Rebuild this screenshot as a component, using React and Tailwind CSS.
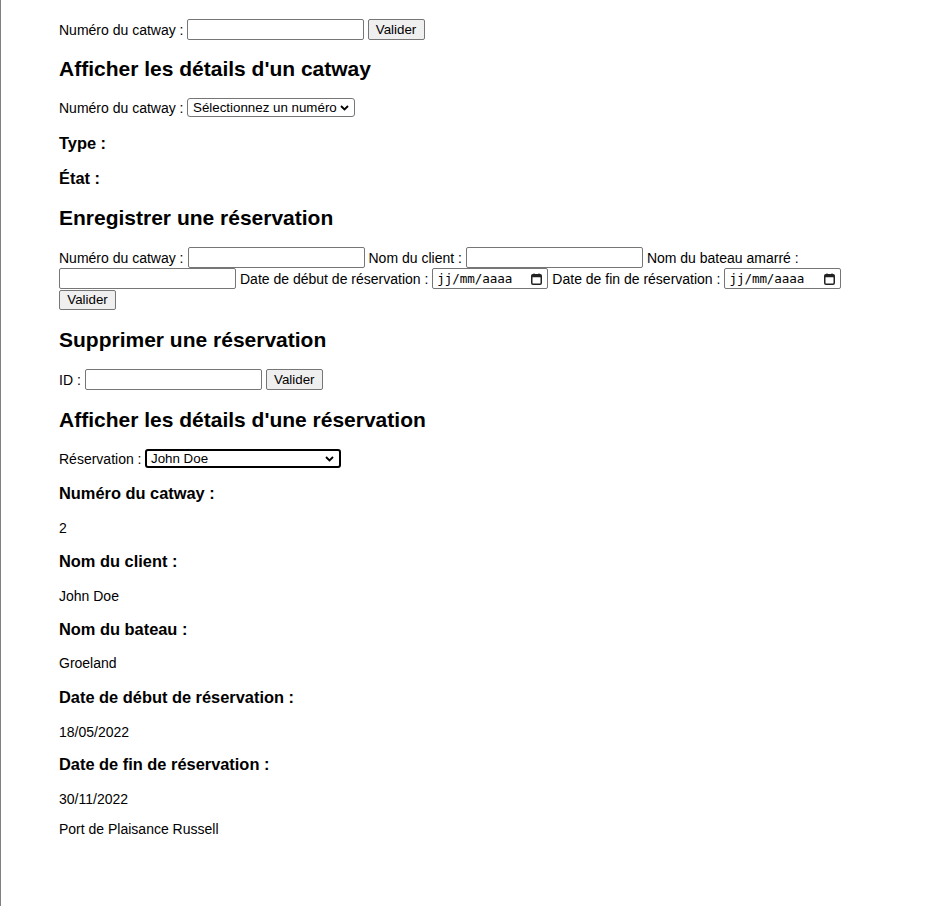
import { useState } from "react";

const reservations = [
  {
    id: "1",
    client: "John Doe",
    catway: "2",
    boat: "Groeland",
    start: "18/05/2022",
    end: "30/11/2022",
  },
];

function Chevron() {
  return (
    <svg width="9" height="6" viewBox="0 0 9 6" className="shrink-0">
      <path d="M1 1l3.5 3.5L8 1" fill="none" stroke="#000" strokeWidth="1.8" />
    </svg>
  );
}

function CalendarIcon() {
  return (
    <svg width="11" height="12" viewBox="0 0 11 12" className="shrink-0">
      <rect x="0.75" y="1.75" width="9.5" height="9.5" rx="1.2" fill="none" stroke="#222" strokeWidth="1.5" />
      <rect x="0.75" y="1.75" width="9.5" height="2.5" fill="#222" />
      <path d="M3 0.5v2M8 0.5v2" stroke="#222" strokeWidth="1.3" />
    </svg>
  );
}

function TextInput({ w = "w-[177px]" }) {
  return (
    <input
      type="text"
      className={`${w} h-[21px] border border-[#767676] rounded-[2px] bg-white px-[2px] text-[13.33px] outline-none`}
    />
  );
}

function Button({ children }) {
  return (
    <button className="h-[21px] w-[57px] border border-[#767676] rounded-[2px] bg-[#efefef] text-[13.33px] leading-none text-black">
      {children}
    </button>
  );
}

function DateInput({ w }) {
  return (
    <span className={`inline-flex items-center justify-between ${w} h-[21px] border border-[#767676] rounded-[2px] bg-white pl-[4px] pr-[5px]`}>
      <span className="font-['DejaVu_Sans_Mono',monospace] text-[12.6px] tracking-[-0.1px]">jj/mm/aaaa</span>
      <CalendarIcon />
    </span>
  );
}

function Row({ gap = "gap-x-[3.5px]", children }) {
  return <div className={`flex items-center ${gap} h-[21px]`}>{children}</div>;
}

function Heading({ children, mt }) {
  return (
    <h2 className={`${mt} text-[21px] leading-[24px] font-bold`}>{children}</h2>
  );
}

export default function App() {
  const [resa] = useState(reservations[0]);

  return (
    <div className="min-h-screen border-l border-[#808080] bg-white text-black font-['Liberation_Sans',Arial,sans-serif] text-[14px] leading-[16px]">
      <div className="pl-[58px] pr-[58px] pt-[19px] pb-[40px]">
        {/* Ajouter un catway */}
        <Row>
          <label>Numéro du catway :</label>
          <TextInput />
          <Button>Valider</Button>
        </Row>

        <Heading mt="mt-[17px]">Afficher les détails d'un catway</Heading>
        <div className="mt-[17px] flex items-center gap-x-[3.5px] h-[19px]">
          <label>Numéro du catway :</label>
          <span className="inline-flex items-center justify-between w-[168px] h-[19px] border border-[#767676] rounded-[3px] bg-white pl-[5px] pr-[5px] text-[13.33px]">
            Sélectionnez un numéro
            <Chevron />
          </span>
        </div>
        <h3 className="mt-[17px] text-[16.4px] leading-[19px] font-bold">Type :</h3>
        <h3 className="mt-[16px] text-[16.4px] leading-[19px] font-bold">État :</h3>

        <Heading mt="mt-[18px]">Enregistrer une réservation</Heading>
        <div className="mt-[17px] flex flex-wrap items-center gap-x-[4px]">
          <div className="flex items-center h-[21px]">Numéro du catway :</div>
          <TextInput />
          <div className="flex items-center h-[21px]">Nom du client :</div>
          <TextInput />
          <div className="flex items-center h-[21px]">Nom du bateau amarré :</div>
          <TextInput />
          <div className="flex items-center h-[21px]">Date de début de réservation :</div>
          <DateInput w="w-[116px]" />
          <div className="flex items-center h-[21px]">Date de fin de réservation :</div>
          <DateInput w="w-[117px]" />
          <div className="flex items-center h-[21px]">
            <button className="h-[20px] w-[57px] border border-[#767676] rounded-[2px] bg-[#efefef] text-[13.33px] leading-none">
              Valider
            </button>
          </div>
        </div>

        <Heading mt="mt-[18px]">Supprimer une réservation</Heading>
        <div className="mt-[17px]">
          <Row gap="gap-x-[4px]">
            <label>ID :</label>
            <TextInput />
            <Button>Valider</Button>
          </Row>
        </div>

        <Heading mt="mt-[18px]">Afficher les détails d'une réservation</Heading>
        <div className="mt-[17px] flex items-center gap-x-[3.5px] h-[19px]">
          <label>Réservation :</label>
          <span className="inline-flex items-center justify-between w-[196px] h-[19px] border-2 border-black rounded-[3px] bg-white pl-[4px] pr-[5px] text-[13.33px]">
            {resa.client}
            <Chevron />
          </span>
        </div>

        <h3 className="mt-[16px] text-[16.4px] leading-[19px] font-bold">Numéro du catway :</h3>
        <p className="mt-[17px]">{resa.catway}</p>
        <h3 className="mt-[16px] text-[16.4px] leading-[19px] font-bold">Nom du client :</h3>
        <p className="mt-[17px]">{resa.client}</p>
        <h3 className="mt-[16px] text-[16.4px] leading-[19px] font-bold">Nom du bateau :</h3>
        <p className="mt-[16px]">{resa.boat}</p>
        <h3 className="mt-[17px] text-[16.4px] leading-[19px] font-bold">Date de début de réservation :</h3>
        <p className="mt-[17px]">{resa.start}</p>
        <h3 className="mt-[15px] text-[16.4px] leading-[19px] font-bold">Date de fin de réservation :</h3>
        <p className="mt-[17px]">{resa.end}</p>

        <footer className="mt-[14px]">
          <p>Port de Plaisance Russell</p>
        </footer>
      </div>
    </div>
  );
}
